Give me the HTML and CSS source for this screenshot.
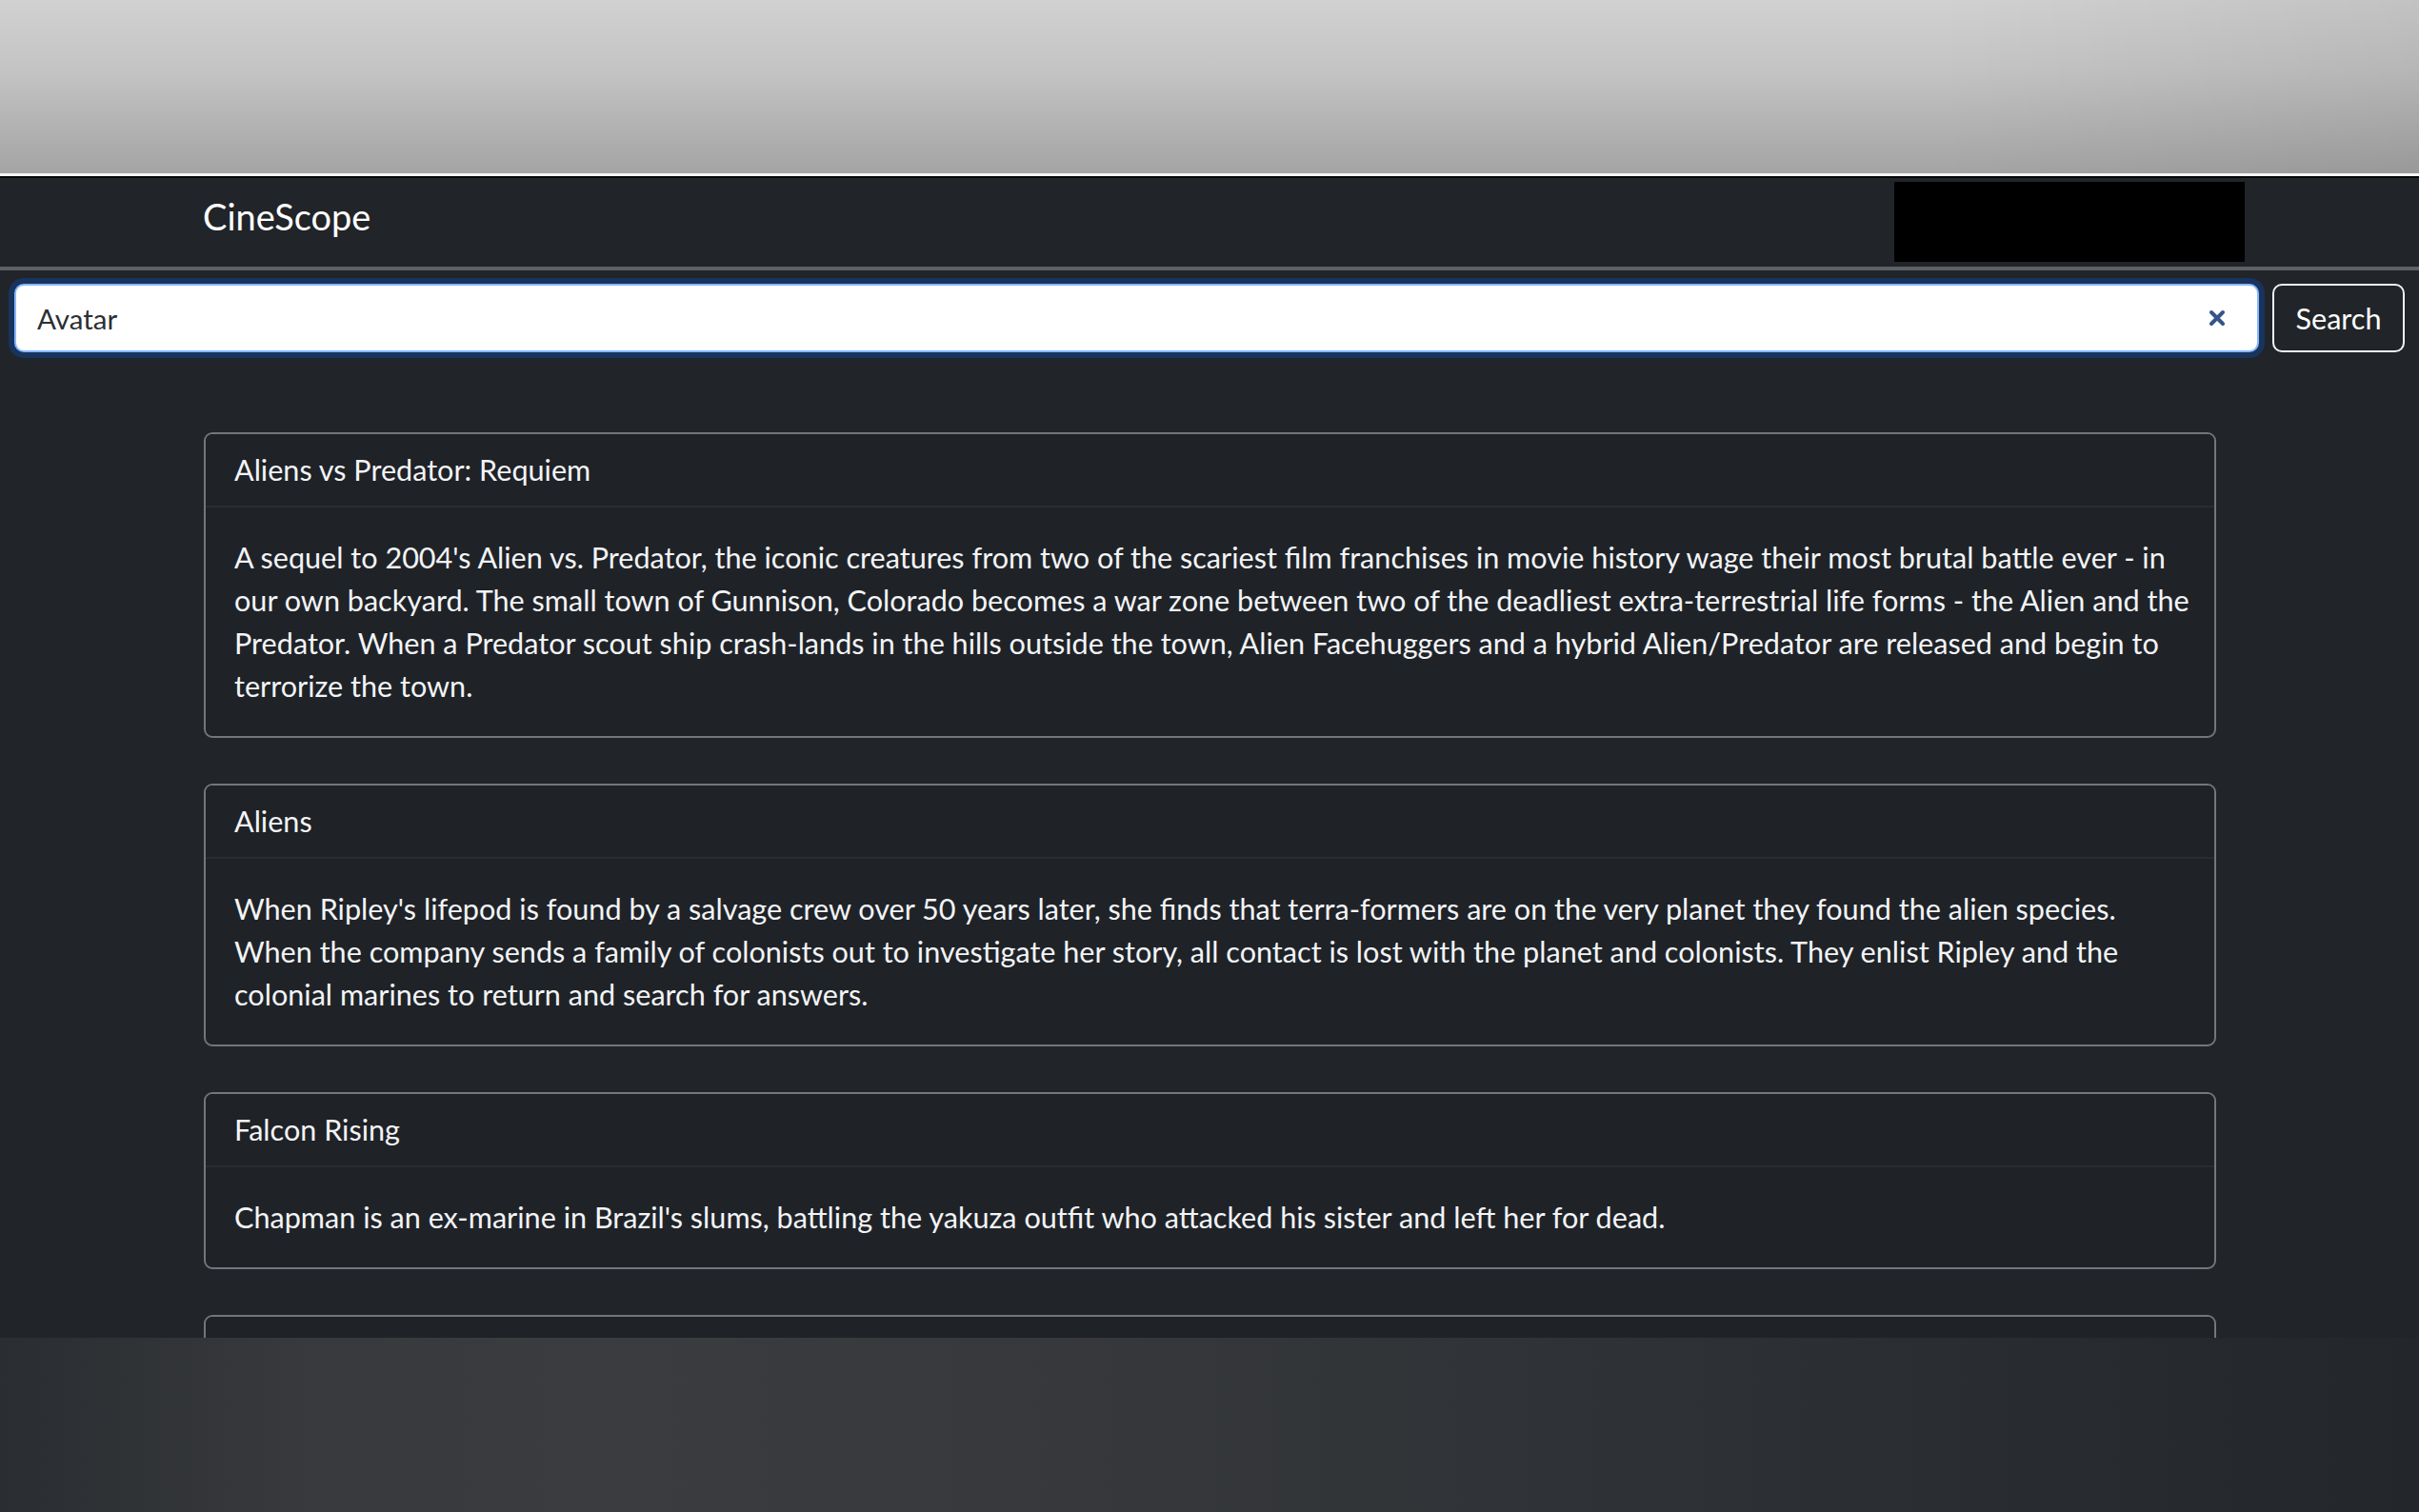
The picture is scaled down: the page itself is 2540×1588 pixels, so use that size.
FILE: index.html
```html
<!DOCTYPE html>
<html lang="en">
<head>
<meta charset="utf-8">
<title>CineScope</title>
<link rel="stylesheet" href="styles.css">
</head>
<body>
<div class="chrome-top"></div>
<div class="chrome-line"></div>
<nav class="navbar">
  <a class="brand" href="#">CineScope</a>
  <div class="redact"></div>
</nav>
<form class="search-row">
  <div class="search-field">
    <span class="search-value">Avatar</span>
    <svg class="clear-icon" viewBox="0 0 20 20" width="20" height="20" aria-hidden="true">
      <path d="M4 4 L16 16 M16 4 L4 16" stroke="#34558a" stroke-width="4" stroke-linecap="round" fill="none"/>
    </svg>
  </div>
  <button class="search-btn" type="button">Search</button>
</form>
<main class="results">
  <article class="card">
    <header class="card-header">Aliens vs Predator: Requiem</header>
    <div class="card-body">A sequel to 2004's Alien vs. Predator, the iconic creatures from two of the scariest film franchises in movie history wage their most brutal battle ever - in our own backyard. The small town of Gunnison, Colorado becomes a war zone between two of the deadliest extra-terrestrial life forms - the Alien and the Predator. When a Predator scout ship crash-lands in the hills outside the town, Alien Facehuggers and a hybrid Alien/Predator are released and begin to terrorize the town.</div>
  </article>
  <article class="card">
    <header class="card-header">Aliens</header>
    <div class="card-body">When Ripley's lifepod is found by a salvage crew over 50 years later, she finds that terra-formers are on the very planet they found the alien species. When the company sends a family of colonists out to investigate her story, all contact is lost with the planet and colonists. They enlist Ripley and the colonial marines to return and search for answers.</div>
  </article>
  <article class="card">
    <header class="card-header">Falcon Rising</header>
    <div class="card-body">Chapman is an ex-marine in Brazil's slums, battling the yakuza outfit who attacked his sister and left her for dead.</div>
  </article>
  <article class="card">
    <header class="card-header">Avatar</header>
    <div class="card-body">In the 22nd century, a paraplegic Marine is dispatched to the moon Pandora on a unique mission.</div>
  </article>
</main>
<div class="bottom-shade"></div>
</body>
</html>
```
FILE: styles.css
```css
html, body {
  margin: 0;
  padding: 0;
}
body {
  background: #212529;
  color: #f3f4f6;
  font-family: Lato, "Open Sans", "Noto Sans", sans-serif;
  font-size: 30.6px;
  line-height: 45px;
  height: 1588px;
  overflow: hidden;
}
.chrome-top {
  height: 182px;
  background:
    linear-gradient(to right, rgba(0,0,0,0) 0%, rgba(0,0,0,0) 80%, rgba(0,0,0,0.07) 100%),
    linear-gradient(to bottom, #d1d1d1 0%, #c4c4c4 40%, #a4a4a4 100%);
}
.chrome-line {
  height: 3px;
  background: #f4f4f4;
  border-bottom: 2px solid #050505;
}
.navbar {
  height: 93px;
  background: #212428;
  border-bottom: 4px solid #5d6166;
  display: flex;
  align-items: center;
  justify-content: space-between;
  padding-left: 213px;
  padding-right: 183px;
}
.brand {
  color: #ffffff;
  text-decoration: none;
  font-size: 38px;
  line-height: 45px;
  margin-bottom: 12px;
}
.redact {
  width: 368px;
  height: 84px;
  background: #000000;
  margin-top: -2px;
}
.search-row {
  display: flex;
  gap: 14px;
  padding: 14px 15px 0 15px;
  margin: 0;
}
.search-field {
  flex: 1;
  height: 72px;
  box-sizing: border-box;
  background: #ffffff;
  border: 2px solid #86b7fe;
  border-radius: 10px;
  box-shadow: 0 0 0 6px rgba(13, 70, 160, 0.45);
  display: flex;
  align-items: center;
  padding: 0 32px 0 22px;
  color: #2b2f33;
}
.search-value {
  flex: 1;
  font-size: 29.5px;
}
.clear-icon {
  width: 20px;
  height: 20px;
}
.search-btn {
  width: 139px;
  height: 72px;
  box-sizing: border-box;
  background: transparent;
  border: 2px solid #f1f3f5;
  border-radius: 10px;
  color: #ffffff;
  font-family: inherit;
  font-size: 30.6px;
  padding: 0;
}
.results {
  display: flex;
  flex-direction: column;
  gap: 48px;
  padding: 84px 213px 0 214px;
}
.card {
  border: 2px solid #72777c;
  border-radius: 9px;
  background: #1f2328;
  overflow: hidden;
}
.card-header {
  padding: 15px 30px;
  border-bottom: 2px solid #292d32;
  background: #1f2227;
}
.card-body {
  padding: 30px 20px 30px 30px;
}
.bottom-shade {
  position: fixed;
  left: 0;
  right: 0;
  bottom: 0;
  height: 183px;
  background:
    linear-gradient(to right, #2a2d31 0%, #37393c 12%, #3a3c3f 25%, #36383b 45%, #2f3236 65%, #282b2f 85%, #23262b 100%);
}
```
